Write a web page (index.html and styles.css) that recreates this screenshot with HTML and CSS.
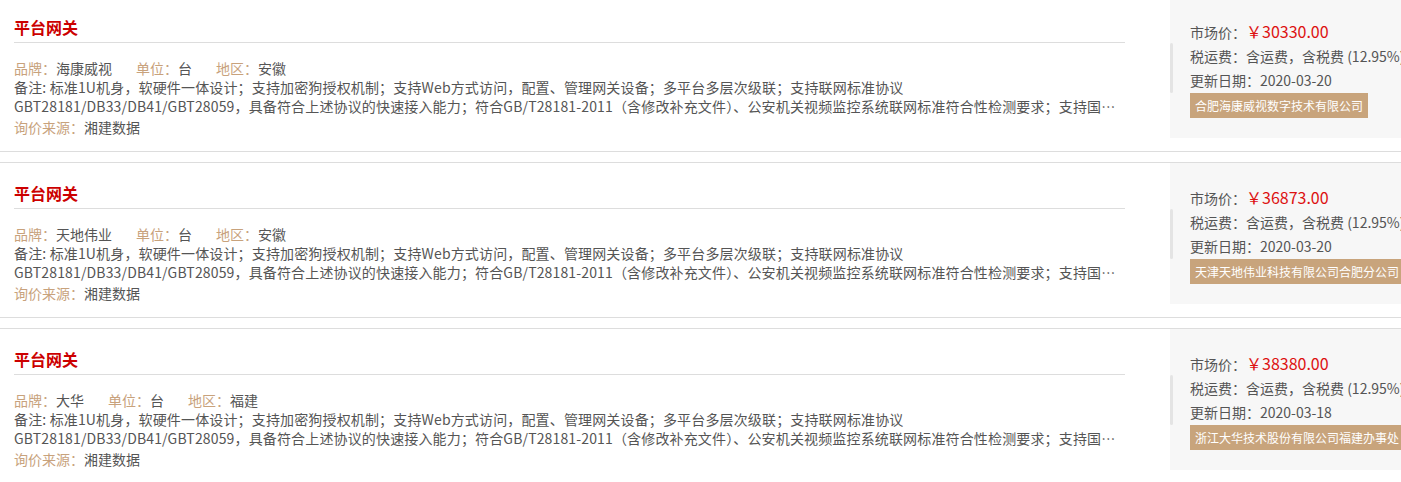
FILE: index.html
```html
<!DOCTYPE html>
<html lang="zh-CN">
<head>
    <meta charset="UTF-8">
    <title>询价列表</title>
    <link rel="stylesheet" href="styles.css">
</head>
<body>
    <div class="list">
        <div class="item">
            <div class="info">
                <h3 class="title">平台网关</h3>
                <div class="meta">
                    <span><em>品牌：</em>海康威视</span>
                    <span><em>单位：</em>台</span>
                    <span><em>地区：</em>安徽</span>
                </div>
                <p class="note">备注: 标准1U机身，软硬件一体设计；支持加密狗授权机制；支持Web方式访问，配置、管理网关设备；多平台多层次级联；支持联网标准协议GBT28181/DB33/DB41/GBT28059，具备符合上述协议的快速接入能力；符合GB/T28181-2011（含修改补充文件）、公安机关视频监控系统联网标准符合性检测要求；支持国标级联，支持多级级联管理。</p>
                <div class="source"><em>询价来源：</em>湘建数据</div>
            </div>
            <div class="price-box">
                <div class="line">市场价：<span class="price">￥30330.00</span></div>
                <div class="line">税运费：含运费，含税费 (12.95%)</div>
                <div class="line">更新日期：2020-03-20</div>
                <span class="company">合肥海康威视数字技术有限公司</span>
            </div>
        </div>

        <div class="item">
            <div class="info">
                <h3 class="title">平台网关</h3>
                <div class="meta">
                    <span><em>品牌：</em>天地伟业</span>
                    <span><em>单位：</em>台</span>
                    <span><em>地区：</em>安徽</span>
                </div>
                <p class="note">备注: 标准1U机身，软硬件一体设计；支持加密狗授权机制；支持Web方式访问，配置、管理网关设备；多平台多层次级联；支持联网标准协议GBT28181/DB33/DB41/GBT28059，具备符合上述协议的快速接入能力；符合GB/T28181-2011（含修改补充文件）、公安机关视频监控系统联网标准符合性检测要求；支持国标级联，支持多级级联管理。</p>
                <div class="source"><em>询价来源：</em>湘建数据</div>
            </div>
            <div class="price-box">
                <div class="line">市场价：<span class="price">￥36873.00</span></div>
                <div class="line">税运费：含运费，含税费 (12.95%)</div>
                <div class="line">更新日期：2020-03-20</div>
                <span class="company">天津天地伟业科技有限公司合肥分公司</span>
            </div>
        </div>

        <div class="item">
            <div class="info">
                <h3 class="title">平台网关</h3>
                <div class="meta">
                    <span><em>品牌：</em>大华</span>
                    <span><em>单位：</em>台</span>
                    <span><em>地区：</em>福建</span>
                </div>
                <p class="note">备注: 标准1U机身，软硬件一体设计；支持加密狗授权机制；支持Web方式访问，配置、管理网关设备；多平台多层次级联；支持联网标准协议GBT28181/DB33/DB41/GBT28059，具备符合上述协议的快速接入能力；符合GB/T28181-2011（含修改补充文件）、公安机关视频监控系统联网标准符合性检测要求；支持国标级联，支持多级级联管理。</p>
                <div class="source"><em>询价来源：</em>湘建数据</div>
            </div>
            <div class="price-box">
                <div class="line">市场价：<span class="price">￥38380.00</span></div>
                <div class="line">税运费：含运费，含税费 (12.95%)</div>
                <div class="line">更新日期：2020-03-18</div>
                <span class="company">浙江大华技术股份有限公司福建办事处</span>
            </div>
        </div>
    </div>
</body>
</html>
```

FILE: styles.css
```css
body { margin: 0; overflow: hidden; background: #fff; color: #555; font-family: "Microsoft YaHei", "Noto Sans CJK SC", sans-serif; font-size: 14px; }
em { font-style: normal; color: #c8a27c; }
.list { margin-top: -4px; }
.item { display: flex; height: 154px; border-top: 1px solid #ddd; border-bottom: 1px solid #ddd; margin-bottom: 10px; }
.info { width: 1111px; padding: 18px 0 0 14px; flex-shrink: 0; }
.title { margin: 0; font-size: 16px; font-weight: bold; color: #cc0000; line-height: 24px; padding-bottom: 3px; border-bottom: 1px solid #ddd; }
.meta { margin-top: 16px; line-height: 19px; display: flex; gap: 24px; }
.note { margin: 0; line-height: 19px; letter-spacing: 0.15px; display: -webkit-box; -webkit-line-clamp: 2; -webkit-box-orient: vertical; overflow: hidden; }
.source { margin-top: 2px; line-height: 19px; }
.price-box { position: relative; margin-left: 45px; width: 260px; flex-shrink: 0; height: 141px; background: #f7f7f7; padding: 22px 0 0 20px; box-sizing: border-box; white-space: nowrap; }
.price-box::before { content: ""; position: absolute; left: 0; top: 46px; width: 3px; height: 50px; background: #e4e4e4; border-radius: 2px; }
.line { line-height: 24px; }
.price { color: #dd1111; font-size: 16px; }
.company { display: inline-block; margin-top: 1px; padding: 0 5px; line-height: 25px; font-size: 12px; color: #fff; background: #c8a47c; }
```
